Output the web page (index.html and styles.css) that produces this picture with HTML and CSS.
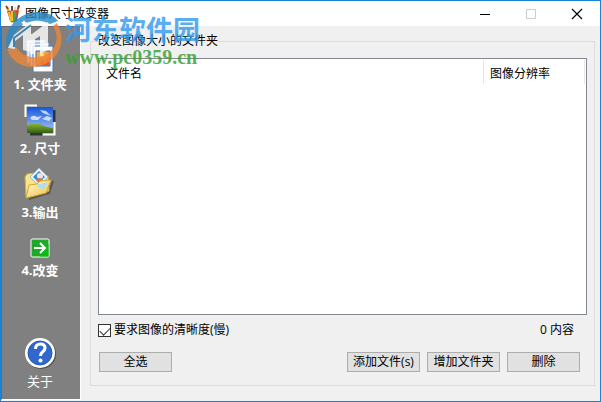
FILE: index.html
```
<!DOCTYPE html>
<html lang="zh-CN">
<head>
<meta charset="utf-8">
<title>图像尺寸改变器</title>
<link rel="stylesheet" href="styles.css">
</head>
<body>
<div class="window">
  <header class="titlebar">
    <svg class="app-icon" viewBox="0 0 16 18" aria-hidden="true">
      <path d="M2 2l3 7" stroke="#e8a33a" stroke-width="2"/>
      <path d="M7 1v8" stroke="#555" stroke-width="2"/>
      <path d="M10 2v7" stroke="#f0d8c0" stroke-width="2"/>
      <path d="M14 1l-3 8" stroke="#c8842c" stroke-width="2"/>
      <path d="M1 1l2 3M14 0l-1 4" stroke="#8a4a20" stroke-width="2"/>
      <path d="M2 6l12-1-2 11q-4 3-7 0z" fill="#dc4a28"/>
      <path d="M4 7l2 9M7 6v10" stroke="#f5bd28" stroke-width="2"/>
      <path d="M10 7l-1 9" stroke="#55a052" stroke-width="2"/>
      <path d="M13 7l-2 9" stroke="#3a70b8"/>
    </svg>
    <h1 class="title">图像尺寸改变器</h1>
    <button class="caption" type="button" aria-label="最小化"><svg viewBox="0 0 12 12"><path d="M1 6.500h10" stroke="#000"/></svg></button>
    <button class="caption" type="button" aria-label="最大化" disabled><svg viewBox="0 0 12 12"><path d="M1.500 1.500h9v9h-9z" fill="none" stroke="#ccc"/></svg></button>
    <button class="caption" type="button" aria-label="关闭"><svg viewBox="0 0 12 12"><path d="M1 1l10 10M11 1L1 11" stroke="#000" stroke-width="1.200"/></svg></button>
  </header>
  <div class="content">
    <nav class="sidebar">
      <button class="step" type="button">
        <svg class="icon-large" viewBox="0 0 32 32" aria-hidden="true">
          <path d="M3 0h18v23H3z" fill="#eaf2fb" stroke="#9bbce6"/>
          <path d="M6 3h19v23H6z" fill="#f4f8fd" stroke="#709edb"/>
          <path d="M9 6h20v26H9z" fill="#fff" stroke="#4470bd"/>
          <path d="M12 11h14v15H12z" fill="#f7a23c" stroke="#2968c8"/>
          <path d="M13 26l5-7 3 3 4-6v10z" fill="#d75a25"/><circle cx="18" cy="15" r="2" fill="#ffe8a0"/>
        </svg>
        <span>1. 文件夹</span>
      </button>
      <button class="step" type="button">
        <svg class="icon-large" viewBox="0 0 32 32" aria-hidden="true">
          <defs><linearGradient id="sky" x2="0" y2="1"><stop stop-color="#1557dc"/><stop offset="1" stop-color="#a9ccf8"/></linearGradient>
          <linearGradient id="grass" x2="0" y2="1"><stop stop-color="#91b936"/><stop offset="1" stop-color="#315f18"/></linearGradient></defs>
          <path d="M6 30h12M30 6v12" stroke="#333" stroke-width="3"/>
          <path d="M3 3h26v26H3z" fill="url(#sky)"/>
          <path d="M6 14q3-4 7-1l5-1-4 4H8zM16 6l6 1 5 5-8-3zM18 15l5-3 5 2-3 3z" fill="#e8f3ff" opacity=".8"/>
          <path d="M3 21q8-4 15 0 6 3 11 3v5H3z" fill="url(#grass)"/>
          <path d="M1.500 13V1.500H13M30.500 18v12.500H19" fill="none" stroke="#fff" stroke-width="2"/>
        </svg>
        <span>2. 尺寸</span>
      </button>
      <button class="step" type="button">
        <svg class="icon-large" viewBox="0 0 32 32" aria-hidden="true">
          <defs><linearGradient id="folder" x2="1" y2="1"><stop stop-color="#fffbd0"/><stop offset="1" stop-color="#eec045"/></linearGradient></defs>
          <path d="M5 31l20-6 4-12" fill="none" stroke="#555" stroke-width="2"/>
          <path d="M2 29L1 9l2-3 7-1 2 2 12 1 1 15z" fill="#f9e48a" stroke="#d8aa42"/>
          <path d="M15 0l9 9-9 9-9-9z" fill="#eaf7ff" stroke="#9eb7ce"/>
          <path d="M15 3l6 6-6 6-6-6z" fill="#3191dc"/><circle cx="16" cy="8" r="3" fill="#f8e0d4"/><path d="M12 12q4-4 7 0l-4 3z" fill="#e8704e"/>
          <path d="M2 30l3-13 8-1 3-3 11-1-5 13z" fill="url(#folder)" stroke="#d8a52f"/>
          <path d="M12 17l12-3-5 8z" fill="#a9dff5"/>
        </svg>
        <span>3.输出</span>
      </button>
      <button class="step step-run" type="button">
        <svg class="icon-small" viewBox="0 0 20 20" aria-hidden="true">
          <rect x=".5" y=".5" width="19" height="19" rx="2" fill="#fff"/><path d="M1.500 1.500h17v17h-17z" fill="#20a82b"/><path d="M10 18.500h8.500V6z" fill="#08bd0c"/>
          <path d="M4 10h11M10 5l5 5-5 5" fill="none" stroke="#fff" stroke-width="2"/>
        </svg>
        <span>4.改变</span>
      </button>
      <button class="step about" type="button">
        <svg class="icon-large" viewBox="0 0 32 32" aria-hidden="true">
          <circle cx="17" cy="17" r="15" fill="#505050"/><circle cx="16" cy="16" r="15" fill="#fff"/><circle cx="16" cy="16" r="12" fill="#3268cc" stroke="#235abc"/>
          <path d="M11.500 12q0-5 5-5 4.500 0 4.500 4 0 2-2.500 4-2 1.500-2 4" fill="none" stroke="#fff" stroke-width="3"/><circle cx="16.500" cy="23.500" r="2" fill="#fff"/>
        </svg>
        <span>关于</span>
      </button>
    </nav>
    <main class="main">
      <fieldset class="group">
        <legend>改变图像大小的文件夹</legend>
        <div class="list">
          <table>
            <thead><tr><th>文件名</th><th class="resolution">图像分辨率</th></tr></thead>
          </table>
        </div>
        <div class="options">
          <label class="check"><input type="checkbox" checked>要求图像的清晰度(慢)</label>
          <span>0 内容</span>
        </div>
        <div class="actions">
          <button class="btn select-all" type="button">全选</button>
          <button class="btn" type="button">添加文件(s)</button>
          <button class="btn" type="button">增加文件夹</button>
          <button class="btn" type="button">删除</button>
        </div>
      </fieldset>
    </main>
  </div>
  <div class="watermark">
    <svg class="mark-logo" viewBox="0 0 58 58" aria-hidden="true">
      <path d="M3 38C-1 22 10 5 27 2c12-3 22 1 27 8L46 13C38 8 24 8 15 17 8 24 8 31 10 37z" fill="#2589c8"/>
      <path d="M3 38l9-2c5 9 17 13 29 8 12-6 15-18 8-29l4-3c8 14 5 30-8 39-15 10-36 5-42-13z" fill="#ef8538"/>
      <path d="M10 24l17-13v30l-8-2V24l-8 6v8l-7-1z" fill="#fff"/>
      <path d="M28 23l16-12v28l-8 4V25l-5 3v15h-5V23z" fill="#fff"/>
      <path d="M27 14L10 27v9" fill="none" stroke="#2589c8" stroke-width="2"/>
      <path d="M20 9l1 2h2l-2 2 1 2-2-1-2 1 1-2-2-2h2z" fill="#fff"/>
    </svg>
    <div class="mark-text"><span class="mark-name">河东软件园</span><span class="mark-url">www.pc0359.cn</span></div>
  </div>
</div>
</body>
</html>
```
FILE: styles.css
```
* { box-sizing: border-box; }
body {
  margin: 0;
  font: 12px/16px "Open Sans", "Noto Sans CJK SC", sans-serif;
  color: #000;
}
button { font: inherit; color: inherit; }
.window {
  position: relative;
  display: flex;
  flex-direction: column;
  min-height: 100vh;
  border: 1px solid #1883d7;
  background: #f0f0f0;
}
.titlebar {
  display: flex;
  align-items: center;
  height: 25px;
  padding-left: 4px;
  background: #fff;
}
.app-icon { width: 16px; height: 18px; fill: none; }
.title { flex: 1; margin: 0 0 0 4px; font-size: 12px; font-weight: 400; }
.caption {
  display: grid;
  place-items: center;
  width: 46px;
  height: 25px;
  padding: 0;
  border: 0;
  background: none;
}
.caption svg { width: 12px; height: 12px; }
.content { display: flex; flex: 1; }
.sidebar {
  display: flex;
  flex-direction: column;
  flex: none;
  gap: 12px;
  width: 80px;
  margin-bottom: 1px;
  padding: 13px 2px 10px 0;
  border: 1px solid #fff;
  border-top-color: #696969;
  border-left-color: #696969;
  background: #808080;
}
.step {
  display: flex;
  flex-direction: column;
  align-items: center;
  gap: 4px;
  padding: 0;
  border: 0;
  background: none;
  color: #fff;
  font-size: 13px;
  font-weight: 700;
}
.icon-large { width: 32px; height: 32px; }
.icon-small { width: 20px; height: 20px; }
.step-run { padding-top: 6px; }
.about { margin-top: auto; font-weight: 400; }
.main { display: flex; flex: 1; padding: 7px 5px 15px 9px; }
.group {
  display: flex;
  flex-direction: column;
  flex: 1;
  min-width: 0;
  margin: 0;
  padding: 9px 7px 13px;
  border: 1px solid #dcdcdc;
}
legend { padding: 0; }
.list {
  flex: 1;
  padding: 1px;
  border: 1px solid #828790;
  background: #fff;
}
table { width: 100%; border-collapse: collapse; }
th {
  height: 24px;
  padding: 3px 6px 0;
  border-right: 1px solid #e5e5e5;
  text-align: left;
  font-weight: 400;
}
.resolution { width: 101px; }
.options {
  display: flex;
  align-items: center;
  justify-content: space-between;
  padding: 7px 13px 14px 0;
}
.check { display: flex; align-items: center; gap: 3px; }
.check input {
  appearance: none;
  width: 13px;
  height: 13px;
  margin: 0;
  border: 1px solid #333;
  background: #fff;
}
.check input:checked::before {
  content: "";
  display: block;
  width: 9px;
  height: 5px;
  margin: 2px 1px;
  border: solid #333;
  border-width: 0 0 1px 1px;
  transform: rotate(-45deg);
}
.actions { display: flex; gap: 7px; padding: 0 7px 0 1px; }
.btn {
  width: 73px;
  height: 20px;
  padding: 0;
  border: 1px solid #adadad;
  background: #e1e1e1;
  line-height: 18px;
  white-space: nowrap;
}
.select-all { margin-right: auto; }
.watermark {
  position: absolute;
  top: 10px;
  left: 3px;
  display: flex;
  gap: 3px;
  opacity: 0.8;
  pointer-events: none;
}
.mark-logo { width: 58px; height: 58px; }
.mark-text { display: flex; flex-direction: column; font-weight: 700; }
.mark-name {
  color: #2f9bee;
  font-family: "Noto Sans CJK SC", sans-serif;
  font-size: 27px;
  line-height: 36px;
}
.mark-url {
  color: #33a02c;
  font-family: "Liberation Serif", serif;
  font-size: 20px;
  line-height: 20px;
}
```
